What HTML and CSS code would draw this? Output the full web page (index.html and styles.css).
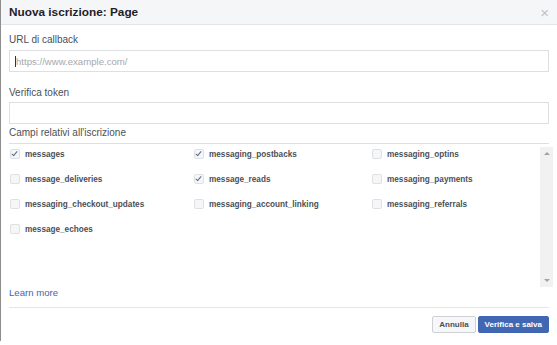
FILE: index.html
```html
<!DOCTYPE html>
<html lang="it">
<head>
    <meta charset="UTF-8">
    <title>Nuova iscrizione: Page</title>
    <link rel="stylesheet" href="styles.css">
</head>
<body>
    <div class="dialog">
        <div class="header">
            <h3>Nuova iscrizione: Page</h3>
            <span class="close">&times;</span>
        </div>
        <div class="body">
            <label class="fieldLabel first">URL di callback</label>
            <div class="input"><span class="caret"></span><span class="placeholder">https://www.example.com/</span></div>
            <label class="fieldLabel">Verifica token</label>
            <div class="input"></div>
            <label class="fieldLabel fieldsTitle">Campi relativi all'iscrizione</label>
            <div class="fieldsBox">
                <div class="grid">
                    <div class="item"><span class="check on"></span>messages</div>
                    <div class="item"><span class="check on"></span>messaging_postbacks</div>
                    <div class="item"><span class="check"></span>messaging_optins</div>
                    <div class="item"><span class="check"></span>message_deliveries</div>
                    <div class="item"><span class="check on"></span>message_reads</div>
                    <div class="item"><span class="check"></span>messaging_payments</div>
                    <div class="item"><span class="check"></span>messaging_checkout_updates</div>
                    <div class="item"><span class="check"></span>messaging_account_linking</div>
                    <div class="item"><span class="check"></span>messaging_referrals</div>
                    <div class="item"><span class="check"></span>message_echoes</div>
                </div>
                <div class="scrollbar">
                    <span class="arrow up"></span>
                    <span class="arrow down"></span>
                </div>
            </div>
            <a class="learn" href="#">Learn more</a>
        </div>
        <div class="footer">
            <button class="btn">Annulla</button>
            <button class="btn primary">Verifica e salva</button>
        </div>
    </div>
</body>
</html>
```

FILE: styles.css
```css
body{
    margin: 0;
    background: #fff;
    font-family: "Liberation Sans", Arial, sans-serif;
}
.dialog{
    width: 556px;
    height: 341px;
    border-left: 1px solid #8d8d8d;
}
.header{
    height: 24px;
    background: #f5f6f7;
    border-bottom: 1px solid #e5e5e5;
    display: flex;
    align-items: center;
    justify-content: space-between;
    padding: 0 8px;
}
.header h3{
    margin: 0;
    font-size: 11.8px;
    font-weight: bold;
    color: #1d2129;
}
.close{
    color: #bec2c9;
    font-size: 15px;
    line-height: 1;
}
.body{
    padding: 0 8px;
}
.fieldLabel{
    display: block;
    font-size: 10px;
    line-height: 12px;
    color: #4b4f56;
    padding-top: 15px;
    margin-bottom: 3px;
}
.fieldLabel.first{
    padding-top: 9px;
    margin-bottom: 4px;
}
.input{
    box-sizing: border-box;
    height: 22px;
    border: 1px solid #dddfe2;
    display: flex;
    align-items: center;
    padding-left: 5px;
    margin-right: 0;
}
.caret{
    width: 1px;
    height: 11px;
    background: #333;
}
.placeholder{
    font-size: 9.6px;
    color: #a5a8ad;
}
.fieldLabel.fieldsTitle{
    padding-top: 3px;
    padding-bottom: 4px;
    margin-bottom: 0;
    border-bottom: 1px solid #dddfe2;
}
.fieldsBox{
    display: flex;
    height: 140px;
    margin-top: 3px;
    margin-right: -4px;
}
.grid{
    flex: 1;
    display: grid;
    grid-template-columns: 184px 178px 1fr;
    grid-auto-rows: 25px;
    align-content: start;
}
.item{
    display: flex;
    align-items: center;
    height: 14px;
    font-size: 8.2px;
    font-weight: bold;
    color: #4b4f56;
    padding-left: 1px;
}
.check{
    width: 8px;
    height: 8px;
    border: 1px solid #dfe0e3;
    border-radius: 2px;
    background: #f5f6f7;
    margin-right: 5px;
    position: relative;
}
.check.on::after{
    content: "";
    position: absolute;
    left: 2px;
    top: 0;
    width: 2px;
    height: 5px;
    border: solid #5b6b88;
    border-width: 0 1.5px 1.5px 0;
    transform: rotate(40deg);
}
.scrollbar{
    width: 13px;
    background: #f1f1f1;
    position: relative;
}
.arrow{
    position: absolute;
    left: 4px;
    width: 0;
    height: 0;
    border-left: 3px solid transparent;
    border-right: 3px solid transparent;
}
.arrow.up{
    top: 5px;
    border-bottom: 3px solid #a3a3a3;
}
.arrow.down{
    bottom: 5px;
    border-top: 3px solid #a3a3a3;
}
.learn{
    display: block;
    font-size: 9.6px;
    line-height: 12px;
    color: #4267b2;
    text-decoration: none;
    height: 20px;
}
.footer{
    margin: 0 8px;
    border-top: 1px solid #e5e5e5;
    display: flex;
    justify-content: flex-end;
    gap: 2px;
    padding-top: 8px;
}
.btn{
    font-family: inherit;
    font-size: 8px;
    font-weight: bold;
    height: 17px;
    padding: 0 6px;
    border: 1px solid #ced0d4;
    background: #f6f7f9;
    color: #4b4f56;
    border-radius: 2px;
}
.btn.primary{
    background: #4267b2;
    border-color: #4267b2;
    color: #fff;
}
```
